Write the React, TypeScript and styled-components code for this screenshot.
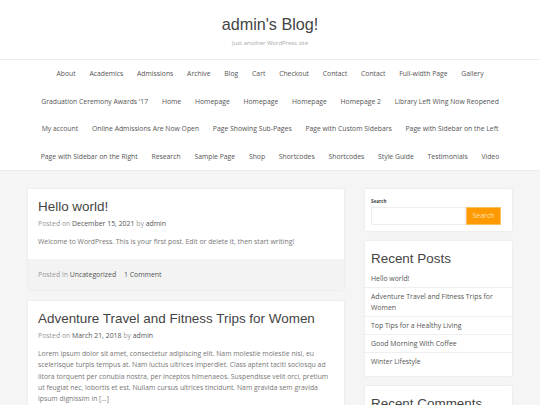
import React from "react";
import styled, { createGlobalStyle } from "styled-components";

const Global = createGlobalStyle`
  html, body { margin: 0; padding: 0; }
  body {
    background: #f5f5f5;
    font-family: "Open Sans", "Liberation Sans", sans-serif;
    color: #777;
  }
  * { box-sizing: border-box; }
`;

const Header = styled.header`
  background: #fff;
  height: 60px;
  border-bottom: 1px solid #ececec;
  display: flex;
  flex-direction: column;
  align-items: center;
  padding-top: 14px;
`;

const SiteTitle = styled.h1`
  margin: 0;
  font-family: "Liberation Sans", Arial, sans-serif;
  font-weight: 400;
  font-size: 16.2px;
  line-height: 20px;
  color: #444;
`;

const Tagline = styled.p`
  margin: 5px 0 0;
  font-size: 6.1px;
  line-height: 8px;
  color: #aaa;
  letter-spacing: -0.1px;
`;

const Nav = styled.nav`
  background: #fff;
  border-bottom: 1px solid #ececec;
  display: flex;
  flex-wrap: wrap;
  justify-content: center;
`;

const NavItem = styled.a`
  display: block;
  height: 27.5px;
  line-height: 27.5px;
  padding: 0 6.9px;
  font-size: 6.82px;
  color: #555;
  text-decoration: none;
  white-space: nowrap;
`;

const NavBreak = styled.span`
  flex-basis: 100%;
  height: 0;
`;

const Content = styled.div`
  width: 484px;
  margin: 0 auto;
  padding-top: 18px;
  display: grid;
  grid-template-columns: 316px 147px;
  column-gap: 21px;
  align-items: start;
`;

const Main = styled.main`
  display: flex;
  flex-direction: column;
  gap: 11px;
`;

const Card = styled.article`
  background: #fff;
  box-shadow: 0 0 2px rgba(0, 0, 0, 0.09);
`;

const CardBody = styled.div`
  padding: 10px 10px 12px;
`;

const PostTitle = styled.h2`
  margin: 0;
  font-family: "Liberation Sans", Arial, sans-serif;
  font-weight: 400;
  font-size: 13.45px;
  line-height: 16px;
  color: #444;
`;

const Meta = styled.div`
  margin-top: 3px;
  font-size: 6.9px;
  line-height: 11.2px;
  color: #999;
`;

const Link = styled.span<{ $gap?: number }>`
  color: #555555;
  margin-right: ${(p) => (p.$gap ? `${p.$gap}px` : "0")};
`;

const Excerpt = styled.p`
  margin: 6.5px 0 0;
  font-size: 6.85px;
  line-height: 11.3px;
  color: #777;
`;

const CardFooter = styled.footer`
  background: #f3f3f3;
  padding: 10px 10px;
  font-size: 6.9px;
  line-height: 11.2px;
  color: #999;
`;

const Sidebar = styled.aside`
  display: flex;
  flex-direction: column;
  gap: 10px;
`;

const Widget = styled.section<{ $top?: number; $bottom?: number }>`
  background: #fff;
  box-shadow: 0 0 2px rgba(0, 0, 0, 0.09);
  padding: ${(p) => p.$top ?? 10}px 6px ${(p) => p.$bottom ?? 6}px;
`;

const SearchLabel = styled.label`
  display: block;
  font-size: 4.6px;
  line-height: 7px;
  font-weight: 700;
  color: #444;
  margin-bottom: 2px;
`;

const SearchRow = styled.div`
  display: flex;
  align-items: stretch;
  height: 18px;
`;

const SearchInput = styled.div`
  width: 95px;
  border: 1px solid #eee;
  background: #fff;
`;

const SearchButton = styled.button`
  width: 35px;
  border: 1px solid #fbc15a;
  background: #ff9900;
  color: #fde3b8;
  font-family: "Open Sans", sans-serif;
  font-size: 7px;
  padding: 0;
  cursor: pointer;
`;

const WidgetTitle = styled.h3`
  margin: 0 0 3px;
  font-family: "Liberation Sans", Arial, sans-serif;
  font-weight: 400;
  font-size: 13.45px;
  line-height: 16px;
  color: #444;
`;

const PostList = styled.ul`
  list-style: none;
  margin: 0 -6px;
  padding: 0;
`;

const PostItem = styled.li`
  padding: 3px 6px;
  font-size: 6.9px;
  line-height: 11px;
  color: #555;
  & + & {
    border-top: 1px solid #efefef;
  }
`;

const navRows = [
  ["About", "Academics", "Admissions", "Archive", "Blog", "Cart", "Checkout", "Contact", "Contact", "Full-width Page", "Gallery"],
  ["Graduation Ceremony Awards '17", "Home", "Homepage", "Homepage", "Homepage", "Homepage 2", "Library Left Wing Now Reopened"],
  ["My account", "Online Admissions Are Now Open", "Page Showing Sub-Pages", "Page with Custom Sidebars", "Page with Sidebar on the Left"],
  ["Page with Sidebar on the Right", "Research", "Sample Page", "Shop", "Shortcodes", "Shortcodes", "Style Guide", "Testimonials", "Video"],
];

const recent = [
  "Hello world!",
  "Adventure Travel and Fitness Trips for Women",
  "Top Tips for a Healthy Living",
  "Good Morning With Coffee",
  "Winter Lifestyle",
];

export default function App() {
  return (
    <>
      <Global />
      <Header>
        <SiteTitle>admin's Blog!</SiteTitle>
        <Tagline>Just another WordPress site</Tagline>
      </Header>
      <Nav>
        {navRows.map((row, i) => (
          <React.Fragment key={i}>
            {i > 0 && <NavBreak />}
            {row.map((item, j) => (
              <NavItem key={j} href="#">
                {item}
              </NavItem>
            ))}
          </React.Fragment>
        ))}
      </Nav>
      <Content>
        <Main>
          <Card>
            <CardBody>
              <PostTitle>Hello world!</PostTitle>
              <Meta>
                Posted on <Link>December 15, 2021</Link> by <Link>admin</Link>
              </Meta>
              <Excerpt>
                Welcome to WordPress. This is your first post. Edit or delete it, then start writing!
              </Excerpt>
            </CardBody>
            <CardFooter>
              Posted in <Link $gap={6}>Uncategorized</Link> <Link>1 Comment</Link>
            </CardFooter>
          </Card>
          <Card>
            <CardBody>
              <PostTitle>Adventure Travel and Fitness Trips for Women</PostTitle>
              <Meta>
                Posted on <Link>March 21, 2018</Link> by <Link>admin</Link>
              </Meta>
              <Excerpt>
                Lorem ipsum dolor sit amet, consectetur adipiscing elit. Nam molestie molestie nisl, eu
                scelerisque turpis tempus at. Nam luctus ultrices imperdiet. Class aptent taciti sociosqu ad
                litora torquent per conubia nostra, per inceptos himenaeos. Suspendisse velit orci, pretium
                ut feugiat nec, lobortis et est. Nullam cursus ultrices tincidunt. Nam gravida sem gravida
                ipsum dignissim in […]
              </Excerpt>
            </CardBody>
          </Card>
        </Main>
        <Sidebar>
          <Widget $top={8.5} $bottom={6.5}>
            <SearchLabel>Search</SearchLabel>
            <SearchRow>
              <SearchInput />
              <SearchButton>Search</SearchButton>
            </SearchRow>
          </Widget>
          <Widget>
            <WidgetTitle>Recent Posts</WidgetTitle>
            <PostList>
              {recent.map((r) => (
                <PostItem key={r}>{r}</PostItem>
              ))}
            </PostList>
          </Widget>
          <Widget>
            <WidgetTitle>Recent Comments</WidgetTitle>
          </Widget>
        </Sidebar>
      </Content>
    </>
  );
}
